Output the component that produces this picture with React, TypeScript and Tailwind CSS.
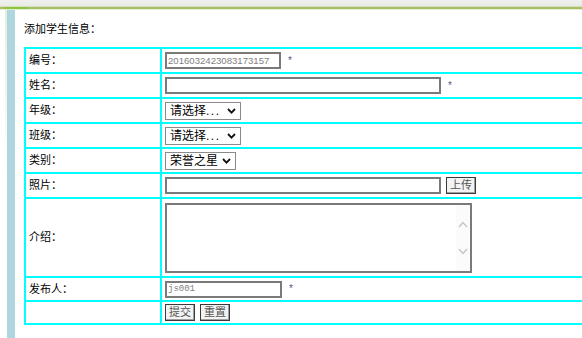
import type { ReactNode } from 'react';

const font = "font-['Liberation_Sans','Noto_Sans_CJK_SC',sans-serif]";

function Row({ label, h, children }: { label?: string; h: string; children?: ReactNode }) {
    return (
        <div className={`grid grid-cols-[136px_1fr] ${h}`}>
            <div className="flex items-center border border-[#00ffff] pl-[3px] text-[11px] text-black">
                {label}
            </div>
            <div className="flex items-center gap-[5px] border border-[#00ffff] pl-[3px]">
                {children}
            </div>
        </div>
    );
}

function Star() {
    return <span className="ml-[2px] text-[10px] leading-none text-[#4b5d7d]">*</span>;
}

function TextBox({ w, value, mono }: { w: string; value?: string; mono?: boolean }) {
    return (
        <input
            readOnly
            value={value ?? ''}
            className={`${w} h-[17px] border-2 border-[#7a7a7a] bg-white px-[1px] ${mono ? "font-['Liberation_Mono',monospace] text-[9px]" : 'text-[9.6px]'} text-[#7f7f7f] outline-none`}
        />
    );
}

function Chevron() {
    return (
        <svg width="9" height="6" viewBox="0 0 9 6" className="ml-auto">
            <path d="M1 1 L4.5 4.6 L8 1" fill="none" stroke="#111" strokeWidth="1.8" />
        </svg>
    );
}

function Select({ w, text }: { w: string; text: ReactNode }) {
    return (
        <div className={`${w} flex h-[18px] items-center border border-[#8a8a8a] bg-white pl-[4px] pr-[4px] text-[12px] leading-none text-black`}>
            <span>{text}</span>
            <Chevron />
        </div>
    );
}

function Btn({ children }: { children: ReactNode }) {
    return (
        <button className="flex h-[17px] w-[30px] items-center justify-center border border-[#3a3a3a] bg-[#f3f3f3] text-[11px] leading-none text-[#555] shadow-[inset_-1px_-1px_0_#a0a0a0]">
            {children}
        </button>
    );
}

export default function App() {
    return (
        <div className={`h-[338px] w-[582px] overflow-hidden bg-white ${font}`}>
            <div className="h-[6px] bg-gradient-to-b from-[#f0f0f0] to-[#e8ebe2]" />
            <div className="flex h-[4px] flex-col">
                <div className="h-[1px] bg-[#d6e0bc]" />
                <div className="flex h-[2px] bg-[#a8bf6a]">
                    <div className="ml-[5px] w-[23px] bg-[#8cc63e]" />
                </div>
                <div className="h-[1px] bg-[#e4ecd2]" />
            </div>
            <div className="flex h-[328px]">
                <div className="w-[5px] shrink-0" />
                <div className="w-[2px] shrink-0 bg-gradient-to-b from-[#e6efd6] via-white to-white" />
                <div className="w-[8px] shrink-0 bg-[#add6e1]" />
                <div className="min-w-0 flex-1 pl-[9px] pt-[12px]">
                    <div className="text-[11px] leading-[15px] text-black">添加学生信息：</div>
                    <div className="mt-[10px] w-[580px] border border-[#00ffff]">
                        <Row label="编号：" h="h-[25px]">
                            <TextBox w="w-[116px]" value="2016032423083173157" />
                            <Star />
                        </Row>
                        <Row label="姓名：" h="h-[25px]">
                            <TextBox w="w-[276px]" />
                            <Star />
                        </Row>
                        <Row label="年级：" h="h-[25px]">
                            <Select w="w-[76px]" text={<>请选择<span className="tracking-[1.5px]">...</span></>} />
                        </Row>
                        <Row label="班级：" h="h-[25px]">
                            <Select w="w-[76px]" text={<>请选择<span className="tracking-[1.5px]">...</span></>} />
                        </Row>
                        <Row label="类别：" h="h-[25px]">
                            <Select w="w-[71px]" text="荣誉之星" />
                        </Row>
                        <Row label="照片：" h="h-[25px]">
                            <TextBox w="w-[276px]" />
                            <Btn>上传</Btn>
                        </Row>
                        <Row label="介绍：" h="h-[79px]">
                            <div className="flex h-[70px] w-[307px] border-2 border-[#7a7a7a] bg-white">
                                <div className="flex-1" />
                                <div className="flex w-[14px] flex-col items-center justify-center gap-[20px] bg-[#fdfafd]">
                                    <svg width="10" height="7" viewBox="0 0 10 7">
                                        <path d="M1 6 L5 1.6 L9 6" fill="none" stroke="#c6c6c6" strokeWidth="1.5" />
                                    </svg>
                                    <svg width="10" height="7" viewBox="0 0 10 7">
                                        <path d="M1 1 L5 5.4 L9 1" fill="none" stroke="#c6c6c6" strokeWidth="1.5" />
                                    </svg>
                                </div>
                            </div>
                        </Row>
                        <Row label="发布人：" h="h-[24px]">
                            <TextBox w="w-[117px]" value="js001" mono />
                            <Star />
                        </Row>
                        <Row h="h-[23px]">
                            <Btn>提交</Btn>
                            <Btn>重置</Btn>
                        </Row>
                    </div>
                </div>
            </div>
        </div>
    );
}
